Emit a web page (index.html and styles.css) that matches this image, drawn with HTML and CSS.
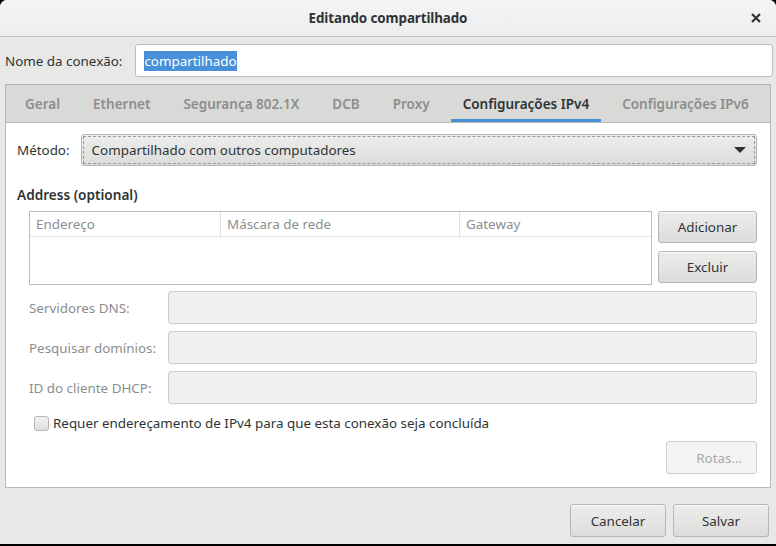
FILE: index.html
```html
<!DOCTYPE html>
<html lang="pt">
<head>
<meta charset="utf-8">
<title>Editando compartilhado</title>
<link rel="stylesheet" href="styles.css">
</head>
<body>
<div class="window">
  <header class="titlebar">
    <span class="title">Editando compartilhado</span>
    <span class="close">
      <svg width="12" height="12" viewBox="0 0 12 12"><path d="M2 2 L10 10 M10 2 L2 10" stroke="#2e3436" stroke-width="2.2" stroke-linecap="butt"/></svg>
    </span>
  </header>

  <div class="name-row">
    <label class="name-label">Nome da conexão:</label>
    <div class="entry name-entry"><span class="selected">compartilhado</span></div>
  </div>

  <div class="notebook">
    <nav class="tabs">
      <span class="tab">Geral</span>
      <span class="tab">Ethernet</span>
      <span class="tab">Segurança 802.1X</span>
      <span class="tab">DCB</span>
      <span class="tab">Proxy</span>
      <span class="tab active">Configurações IPv4</span>
      <span class="tab">Configurações IPv6</span>
    </nav>
    <div class="page">
      <div class="method-row">
        <span class="method-label">Método:</span>
        <div class="combo">
          <span>Compartilhado com outros computadores</span>
          <svg class="arrow" width="12" height="6" viewBox="0 0 12 6"><path d="M0 0 H12 L6 6 Z" fill="#2e3436"/></svg>
        </div>
      </div>

      <h2 class="heading">Address (optional)</h2>

      <div class="address-row">
        <div class="table">
          <div class="thead">
            <span class="th c1">Endereço</span>
            <span class="th c2">Máscara de rede</span>
            <span class="th c3">Gateway</span>
          </div>
          <div class="tbody"></div>
        </div>
        <div class="side-buttons">
          <button class="btn">Adicionar</button>
          <button class="btn">Excluir</button>
        </div>
      </div>

      <div class="fields">
        <span class="field-label">Servidores DNS:</span>
        <div class="entry disabled"></div>
        <span class="field-label">Pesquisar domínios:</span>
        <div class="entry disabled"></div>
        <span class="field-label">ID do cliente DHCP:</span>
        <div class="entry disabled"></div>
      </div>

      <div class="check-row">
        <span class="checkbox"></span>
        <span class="check-text">Requer endereçamento de IPv4 para que esta conexão seja concluída</span>
      </div>

      <div class="routes-row">
        <button class="btn insensitive">Rotas…</button>
      </div>
    </div>
  </div>

  <div class="actions">
    <button class="btn action">Cancelar</button>
    <button class="btn action">Salvar</button>
  </div>
</div>
</body>
</html>
```

FILE: styles.css
```css
* { box-sizing: border-box; }

html, body {
  margin: 0;
  padding: 0;
  width: 776px;
  height: 546px;
  overflow: hidden;
  background: #000;
  font-family: "Noto Sans", "Open Sans", sans-serif;
  font-size: 13.4px;
  color: #2e3436;
}

.window {
  width: 776px;
  height: 544px;
  background: #e8e8e7;
  border-radius: 7px 7px 0 0;
  overflow: hidden;
  display: flex;
  flex-direction: column;
}

.titlebar {
  height: 37px;
  flex: none;
  background: linear-gradient(#f5f5f5, #ededed);
  border-bottom: 1px solid #bdbdbb;
  display: flex;
  align-items: center;
  justify-content: center;
  position: relative;
}

.title {
  font-weight: bold;
  font-size: 13.4px;
  letter-spacing: -0.1px;
}

.close {
  position: absolute;
  right: 14px;
  top: 12px;
  width: 12px;
  height: 12px;
  display: flex;
}

.name-row {
  margin-top: 7px;
  display: flex;
  align-items: center;
  padding: 0 3px 0 5px;
  gap: 13px;
}

.name-label {
  white-space: nowrap;
}

.entry {
  height: 33px;
  background: #fff;
  border: 1px solid #bdbdbb;
  border-radius: 3px;
}

.name-entry {
  flex: 1;
  display: flex;
  align-items: center;
  padding-left: 8px;
}

.selected {
  background: #4a90d9;
  color: #fff;
  line-height: 20px;
}

.notebook {
  margin: 7px 5px 0 5px;
  border: 1px solid #b6b6b3;
  flex: none;
}

.tabs {
  height: 38px;
  background: #d9d9d7;
  border-bottom: 1px solid #b6b6b3;
  display: flex;
  padding-left: 7px;
  gap: 9px;
}

.tab {
  padding: 0 12px;
  display: flex;
  align-items: center;
  color: #8b8e8f;
  font-weight: 600;
  font-size: 13.5px;
  border-bottom: 3px solid transparent;
  padding-top: 3px;
  white-space: nowrap;
}

.tab.active {
  color: #2e3436;
  border-bottom-color: #4a90d9;
}

.page {
  background: #fff;
  padding: 11px 13px 13px 11px;
}

.method-row {
  display: flex;
  align-items: center;
  gap: 11px;
}

.combo {
  flex: 1;
  height: 32px;
  border: 1px solid #b6b6b3;
  border-radius: 3px;
  background: linear-gradient(#ededec, #dcdcda);
  display: flex;
  align-items: center;
  justify-content: space-between;
  padding: 0 10px 0 10px;
  position: relative;
  outline: 1px dashed #9a9a98;
  outline-offset: -3px;
}

.arrow {
  flex: none;
}

.heading {
  margin: 19px 0 0 0;
  font-size: 13.6px;
  font-weight: 600;
  line-height: 20px;
}

.address-row {
  margin: 6px 0 0 12px;
  display: flex;
  gap: 6px;
  height: 74px;
}

.table {
  width: 623px;
  border: 1px solid #bdbdbb;
  display: flex;
  flex-direction: column;
}

.thead {
  display: flex;
  height: 25px;
  border-bottom: 1px solid #e2e2e0;
}

.th {
  color: #8b8e8f;
  padding-left: 6px;
  display: flex;
  align-items: center;
}

.c1 { width: 191px; border-right: 1px solid #e2e2e0; }
.c2 { width: 239px; border-right: 1px solid #e2e2e0; }
.c3 { flex: 1; }

.side-buttons {
  display: flex;
  flex-direction: column;
  gap: 8px;
  width: 99px;
}

.btn {
  font-family: inherit;
  font-size: 13.4px;
  color: #2e3436;
  height: 32px;
  border: 1px solid #b6b6b3;
  border-radius: 3px;
  background: linear-gradient(#ededec, #dcdcda);
  padding: 0 8px;
  box-shadow: inset 0 1px rgba(255,255,255,0.8);
}

.fields {
  margin: 6px 0 0 12px;
  display: grid;
  grid-template-columns: 139px 1fr;
  row-gap: 7px;
  align-items: center;
}

.field-label {
  color: #8b8e8f;
}

.entry.disabled {
  background: #f0f0ef;
  border-color: #cdcdcb;
}

.check-row {
  margin: 9px 0 0 17px;
  height: 20px;
  display: flex;
  align-items: center;
  gap: 4px;
}

.checkbox {
  width: 15px;
  height: 15px;
  border: 1px solid #b6b6b3;
  border-radius: 3px;
  background: linear-gradient(#f3f3f2, #dededc);
}

.routes-row {
  margin-top: 8px;
  display: flex;
  justify-content: flex-end;
}

.btn.insensitive {
  width: 91px;
  height: 33px;
  color: #a7aaab;
  background: #f4f4f3;
  border-color: #cdcdcb;
  box-shadow: none;
  text-align: right;
  padding-right: 14px;
}

.actions {
  margin-top: 16px;
  display: flex;
  justify-content: flex-end;
  gap: 7px;
  padding-right: 7px;
}

.btn.action {
  width: 96px;
  height: 33px;
}
```
